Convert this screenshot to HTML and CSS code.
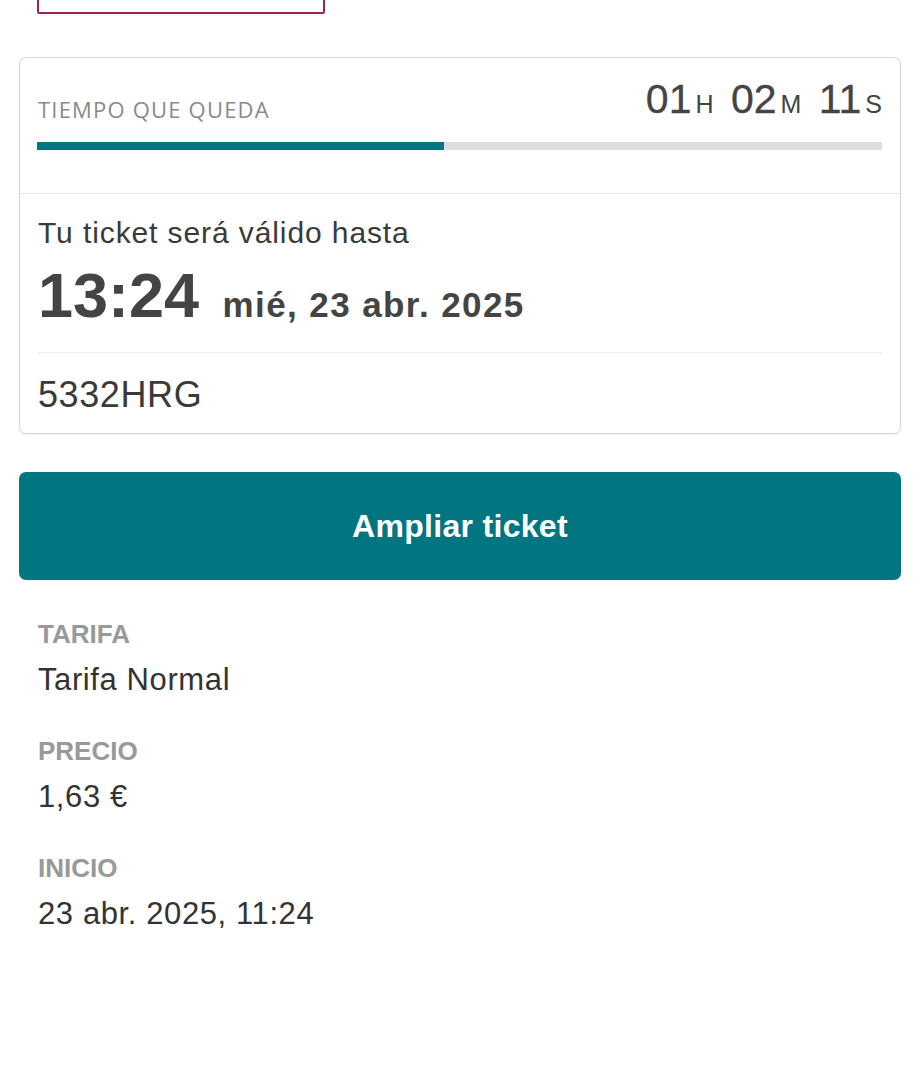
FILE: index.html
```html
<!DOCTYPE html>
<html>
  <head>
    <meta charset="UTF-8">
    <title>Ticket de aparcamiento</title>
    <link rel="stylesheet" href="styles.css">
  </head>
  <body>
    <div class="page">
      <div class="top-action"></div>

      <div class="ticket-card">
        <div class="remaining">
          <div class="remaining-head">
            <span class="remaining-label">TIEMPO QUE QUEDA</span>
            <span class="countdown">
              <span class="num">01</span><span class="unit">H</span>
              <span class="num">02</span><span class="unit">M</span>
              <span class="num">11</span><span class="unit">S</span>
            </span>
          </div>
          <div class="progress">
            <div class="progress-fill" style="width: 48.2%"></div>
          </div>
        </div>

        <div class="validity">
          <div class="validity-text">Tu ticket será válido hasta</div>
          <div class="validity-time">
            <span class="hour">13:24</span>
            <span class="date">mié, 23 abr. 2025</span>
          </div>
          <div class="plate">5332HRG</div>
        </div>
      </div>

      <button type="button" class="extend-btn">Ampliar ticket</button>

      <div class="details">
        <div class="detail">
          <div class="detail-label">TARIFA</div>
          <div class="detail-value">Tarifa Normal</div>
        </div>
        <div class="detail">
          <div class="detail-label">PRECIO</div>
          <div class="detail-value">1,63 €</div>
        </div>
        <div class="detail">
          <div class="detail-label">INICIO</div>
          <div class="detail-value">23 abr. 2025, 11:24</div>
        </div>
      </div>
    </div>
  </body>
</html>
```

FILE: styles.css
```css
body {
  background-color: #fff;
  color: #333;
  font-family: "Liberation Sans", Arial, sans-serif;
  margin: 0;
  padding: 0;
}

.page {
  padding: 0 19px;
}

.top-action {
  border: 2px solid #9e2549;
  border-radius: 2px;
  height: 54px;
  margin-left: 18px;
  margin-top: -44px;
  width: 284px;
}

.ticket-card {
  background-color: #fff;
  border: 1px solid #d6d6d6;
  border-radius: 7px;
  box-shadow: 0 1px 2px rgba(0, 0, 0, 0.06);
  margin-top: 43px;
}

.remaining {
  border-bottom: 1px solid #e6e6e6;
  padding: 21px 18px 43px 17px;
}

.remaining-head {
  align-items: flex-end;
  display: flex;
  justify-content: space-between;
}

.remaining-label {
  color: #8a8a8a;
  font-family: "Open Sans", sans-serif;
  font-size: 22px;
  letter-spacing: 1.2px;
  line-height: 22px;
  padding-left: 1px;
}

.countdown {
  color: #444;
  font-size: 41px;
  height: 40px;
  line-height: 40px;
  padding-bottom: 1px;
  white-space: nowrap;
}

.countdown .num {
  margin-left: 6px;
  -webkit-text-stroke: 0.3px #444;
}

.countdown .num:first-child {
  margin-left: 0;
}

.countdown .unit {
  font-size: 25px;
  margin-left: 4px;
}

.progress {
  background-color: #dddddd;
  height: 8px;
  margin-top: 22px;
}

.progress-fill {
  background-color: #027683;
  height: 100%;
}

.validity {
  padding: 21px 18px 18px;
}

.validity-text {
  color: #3a3a3a;
  font-size: 30px;
  letter-spacing: 0.9px;
  line-height: 36px;
}

.validity-time {
  border-bottom: 1px solid #ececec;
  color: #444;
  margin-top: 13px;
  padding-bottom: 25px;
}

.hour {
  font-size: 63px;
  font-weight: bold;
  line-height: 63px;
}

.date {
  font-size: 35px;
  font-weight: bold;
  letter-spacing: 1.4px;
  margin-left: 19px;
}

.plate {
  color: #3a3a3a;
  font-size: 36px;
  letter-spacing: 0.6px;
  line-height: 40px;
  margin-top: 22px;
}

.extend-btn {
  background-color: #017580;
  border: none;
  border-radius: 7px;
  color: #fff;
  cursor: pointer;
  display: block;
  font-family: "Liberation Sans", Arial, sans-serif;
  font-size: 32px;
  font-weight: bold;
  height: 108px;
  letter-spacing: 0.3px;
  margin-top: 38px;
  padding: 0;
  width: 100%;
}

.details {
  padding: 39px 19px 0;
}

.detail + .detail {
  margin-top: 38px;
}

.detail-label {
  color: #999;
  font-size: 26px;
  font-weight: bold;
  line-height: 30px;
}

.detail-value {
  color: #333;
  font-size: 31px;
  letter-spacing: 0.6px;
  line-height: 36px;
  margin-top: 13px;
}
```
